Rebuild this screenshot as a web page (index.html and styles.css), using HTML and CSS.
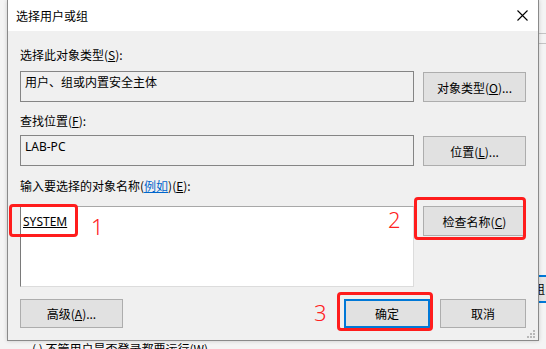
FILE: index.html
```html
<!DOCTYPE html>
<html lang="zh-CN">
<head>
  <meta charset="UTF-8">
  <title>选择用户或组</title>
  <link rel="stylesheet" href="styles.css">
</head>
<body>

  <div class="desk">
    <div class="dialog">
      <div class="titlebar">
        <span class="title">选择用户或组</span>
        <svg class="close" width="11" height="11" viewBox="0 0 11 11">
          <path d="M0.5 0.5L10.5 10.5M10.5 0.5L0.5 10.5" stroke="#000" stroke-width="1.1" fill="none"/>
        </svg>
      </div>

      <div class="content">
        <div class="label first">选择此对象类型(<u>S</u>):</div>
        <div class="row">
          <div class="field">用户、组或内置安全主体</div>
          <button class="btn">对象类型(<u>O</u>)...</button>
        </div>

        <div class="label">查找位置(<u>F</u>):</div>
        <div class="row">
          <div class="field">LAB-PC</div>
          <button class="btn">位置(<u>L</u>)...</button>
        </div>

        <div class="label names-label">输入要选择的对象名称(<a class="link">例如</a>)(<u>E</u>):</div>
        <div class="row names">
          <div class="area"><u>SYSTEM</u></div>
          <button class="btn">检查名称(<u>C</u>)</button>
          <!-- red annotation marks -->
          <div class="mark box1"></div>
          <div class="mark num num1">1</div>
          <div class="mark box2"></div>
          <div class="mark num num2">2</div>
        </div>

        <div class="row actions">
          <button class="btn">高级(<u>A</u>)...</button>
          <span class="spacer"></span>
          <button class="btn small default">确定</button>
          <button class="btn small">取消</button>
          <div class="mark box3"></div>
          <div class="mark num num3">3</div>
        </div>
      </div>

      <svg class="grip" width="10" height="8" viewBox="0 0 10 8">
        <rect x="7" y="0" width="2" height="2" fill="#b8b8b8"/>
        <rect x="4" y="3" width="2" height="2" fill="#b8b8b8"/>
        <rect x="7" y="3" width="2" height="2" fill="#b8b8b8"/>
        <rect x="1" y="6" width="2" height="2" fill="#b8b8b8"/>
        <rect x="4" y="6" width="2" height="2" fill="#b8b8b8"/>
        <rect x="7" y="6" width="2" height="2" fill="#b8b8b8"/>
      </svg>
    </div>

    <div class="side">
      <div class="rule"></div>
      <div class="rule second"></div>
      <div class="tab"><span>组</span></div>
    </div>
  </div>

  <div class="behind">( ) 不管用户是否登录都要运行(W)</div>

</body>
</html>
```

FILE: styles.css
```css
body {
  margin: 0;
  background: #f4f4f4;
  font-family: "Noto Sans", "Noto Sans CJK SC", sans-serif;
  font-size: 12px;
  line-height: 16px;
  color: #000;
  height: 349px;
  overflow: hidden;
}
.desk {
  display: flex;
  padding-left: 7px;
}
.dialog {
  position: relative;
  width: 532px;
  box-sizing: border-box;
  background: #f0f0f0;
  border: 1px solid #8a8a8a;
  border-top: none;
  box-shadow: 0 0 4px rgba(0,0,0,0.18);
}
.titlebar {
  height: 31px;
  background: #fff;
  display: flex;
  align-items: center;
  justify-content: space-between;
  padding: 0 10px 0 8px;
  font-family: "Noto Sans CJK SC", sans-serif;
}
.title {
  line-height: 16px;
}
.content {
  padding: 16px 12px 12px 12px;
  font-family: "Noto Sans CJK SC", sans-serif;
}
.label {
  margin-top: 11px;
  margin-bottom: 6px;
}
.label.first {
  margin-top: 0;
  margin-bottom: 8px;
}
.label.names-label {
  margin-top: 12px;
  margin-bottom: 12px;
}
.link {
  color: #0066cc;
  text-decoration: underline;
}
.row {
  display: flex;
  align-items: flex-start;
  gap: 9px;
  position: relative;
}
.field {
  flex: 1;
  height: 31px;
  box-sizing: border-box;
  background: #f0f0f0;
  border: 1px solid #858585;
  padding: 3px 4px;
  font-family: "Noto Sans", "Noto Sans CJK SC", sans-serif;
}
.btn {
  width: 103px;
  height: 30px;
  margin-top: 1px;
  box-sizing: border-box;
  background: #e1e1e1;
  border: 1px solid #adadad;
  font-family: "Noto Sans CJK SC", sans-serif;
  font-size: 12px;
  color: #000;
  padding: 0;
}
.names .btn {
  margin-top: 0;
}
.area {
  flex: 1;
  height: 81px;
  box-sizing: border-box;
  background: #fff;
  border: 1px solid #dcdcdc;
  border-left-color: #7a7a7a;
  border-top-color: #a8a8a8;
  padding: 7px 2px;
  font-family: "Noto Sans", "Noto Sans CJK SC", sans-serif;
}
.actions {
  margin-top: 12px;
  gap: 10px;
}
.actions .btn {
  margin-top: 0;
  height: 29px;
}
.actions .btn.small {
  width: 86px;
}
.btn.default {
  border: 2px solid #0078d7;
}
.spacer {
  flex: 1;
}

/* red annotation marks */
.mark {
  position: absolute;
}
.box1, .box2, .box3 {
  border: 3px solid #ff1c1c;
  border-radius: 4px;
  box-sizing: border-box;
}
.box1 {
  left: -11px;
  top: -2px;
  width: 69px;
  height: 33px;
}
.box2 {
  left: 394px;
  top: -9px;
  width: 112px;
  height: 43px;
}
.box3 {
  left: 317px;
  top: -7px;
  width: 96px;
  height: 39px;
}
.num {
  font-family: "Noto Sans", sans-serif;
  font-size: 22px;
  line-height: 24px;
  font-weight: 300;
  color: #ff2020;
}
.num1 {
  left: 71px;
  top: 8px;
}
.num2 {
  left: 368px;
  top: 1px;
}
.num3 {
  left: 294px;
  top: 1px;
}
.grip {
  position: absolute;
  right: 2px;
  bottom: 2px;
}
.side {
  flex: 1;
  padding-top: 33px;
  overflow: hidden;
}
.rule {
  height: 1px;
  background: #c4c4c4;
}
.rule.second {
  margin-top: 9px;
}
.tab {
  margin-top: 231px;
  height: 24px;
  border-top: 2px solid #0078d7;
  border-bottom: 2px solid #0078d7;
  background: #e5e5e5;
  font-family: "Noto Sans CJK SC", sans-serif;
  line-height: 24px;
  white-space: nowrap;
}
.tab span {
  margin-left: -6px;
}
.behind {
  margin-top: 0;
  padding-left: 32px;
  font-family: "Noto Sans CJK SC", sans-serif;
}
```
